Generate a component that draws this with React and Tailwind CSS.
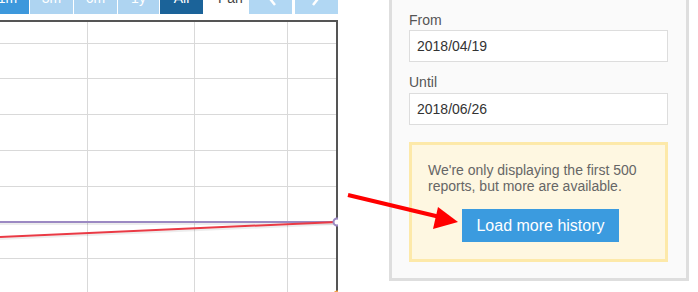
import React from 'react';

const hLines = [23.5, 58.5, 94.5, 130.5, 166.5, 202.5, 238.5];
const vLines = [87.5, 194.5, 287.5];

function RangeButtons() {
  return (
    <div className="ml-[-14px] mt-[-19px] flex h-[33px] text-[14px] leading-none">
      <button type="button" className="w-[43px] bg-[#3d98dc] text-white">1m</button>
      <button type="button" className="ml-px w-[43px] bg-[#aed4f1] text-white">3m</button>
      <button type="button" className="ml-px w-[43px] bg-[#aed4f1] text-white">6m</button>
      <button type="button" className="ml-px w-[41px] bg-[#aed4f1] text-white">1y</button>
      <button type="button" className="ml-px w-[43px] bg-[#1b6399] text-white">All</button>
      <span className="flex w-[46px] items-center pl-[15px] text-[#444]">Pan</span>
      <button type="button" className="flex w-[43px] items-center justify-center bg-[#b1d7f3]">
        <svg width="12" height="22" viewBox="0 0 12 22" className="mt-[-6px]">
          <path d="M10 1 L2 11 L10 21" fill="none" stroke="#fff" strokeWidth="2.5" />
        </svg>
      </button>
      <button type="button" className="ml-[3px] flex w-[43px] items-center justify-center bg-[#b1d7f3]">
        <svg width="12" height="22" viewBox="0 0 12 22" className="mt-[-6px]">
          <path d="M2 1 L10 11 L2 21" fill="none" stroke="#fff" strokeWidth="2.5" />
        </svg>
      </button>
    </div>
  );
}

function Chart() {
  return (
    <svg width="338" height="280" className="mt-[6px] block">
      {hLines.map((y) => (
        <line key={y} x1="0" x2="336" y1={y} y2={y} stroke="#d9d9d9" strokeWidth="1" />
      ))}
      {vLines.map((x) => (
        <line key={x} x1={x} x2={x} y1="2" y2="280" stroke="#d9d9d9" strokeWidth="1" />
      ))}
      <rect x="0" y="0" width="338" height="2" fill="#555" />
      <rect x="336" y="0" width="2" height="280" fill="#555" />
      {/* shadows */}
      <line x1="0" y1="204" x2="336" y2="204" stroke="rgba(0,0,0,0.07)" strokeWidth="2" />
      <line x1="0" y1="219" x2="336" y2="204" stroke="rgba(0,0,0,0.07)" strokeWidth="2" />
      <line x1="0" y1="202" x2="337" y2="202" stroke="#9b89c2" strokeWidth="2" />
      <line x1="0" y1="217" x2="337" y2="202" stroke="#ea3a45" strokeWidth="2" />
      <circle cx="337" cy="202" r="3.5" fill="#fff" stroke="#9b89c2" strokeWidth="2" />
      <circle cx="337" cy="274" r="3.5" fill="#f4a24a" />
    </svg>
  );
}

function HistoryPanel() {
  return (
    <div className="ml-[51px] mt-[-30px] h-[311px] w-[300px] shrink-0 border-[3px] border-[#dedede] bg-[#fafafa] pl-[17px] pr-[18px] pt-[37px]">
      <div className="text-[14px] leading-[20px] text-[#555]">From</div>
      <input
        readOnly
        value="2018/04/19"
        className="block h-[32px] w-full border border-[#dddddd] bg-white px-[7px] text-[14px] text-[#333] outline-none"
      />
      <div className="mb-px mt-[10px] text-[14px] leading-[20px] text-[#555]">Until</div>
      <input
        readOnly
        value="2018/06/26"
        className="block h-[32px] w-full border border-[#dddddd] bg-white px-[7px] text-[14px] text-[#333] outline-none"
      />
      <div className="mt-[17px] border-[3px] border-[#fde9a9] bg-[#fef7e1] pb-[17px] pl-[16px] pr-[12px] pt-[18px]">
        <p className="text-[14px] leading-[15.5px] text-[#666]">
          We're only displaying the first 500 reports, but more are available.
        </p>
        <div className="mt-[15px] flex justify-center">
          <button type="button" className="h-[33px] w-[157px] bg-[#3b9bdf] text-[16px] text-white">
            Load more history
          </button>
        </div>
      </div>
    </div>
  );
}

export default function App() {
  return (
    <div className="relative h-[292px] w-[698px] overflow-hidden bg-white font-['Liberation_Sans',Arial,sans-serif]">
      <div className="flex">
        <div className="w-[338px] shrink-0">
          <RangeButtons />
          <Chart />
        </div>
        <HistoryPanel />
      </div>
      {/* annotation arrow */}
      <svg className="pointer-events-none absolute inset-0" width="698" height="292">
        <line x1="348" y1="195" x2="440" y2="217" stroke="#ff0000" strokeWidth="4" />
        <polygon points="458,222 438,207 433,229" fill="#ff0000" />
      </svg>
    </div>
  );
}
